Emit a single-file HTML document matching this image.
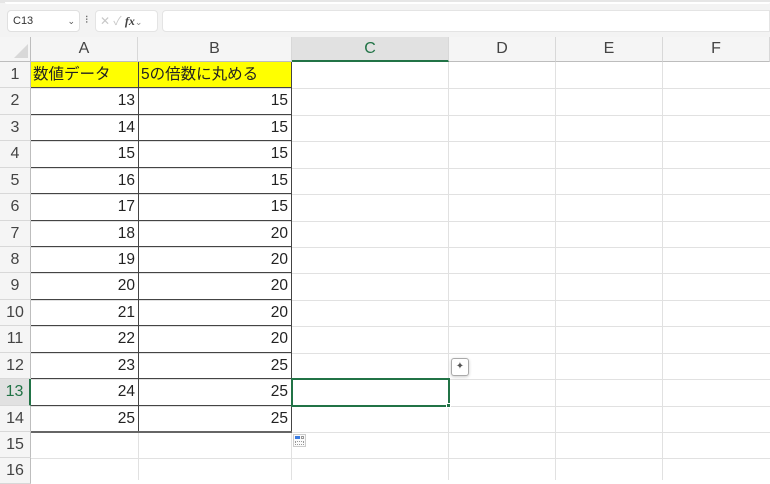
<!DOCTYPE html>
<html><head><meta charset="utf-8"><style>
*{margin:0;padding:0;box-sizing:border-box}
body{width:770px;height:480px;overflow:hidden;background:#fff;position:relative;font-family:"Liberation Sans","Noto Sans CJK JP",sans-serif;color:#222}
.a{position:absolute}
.vl{position:absolute;top:62px;width:1px;height:418px;background:#e1e1e1}
.hl{position:absolute;left:31px;width:739px;height:1px;background:#e1e1e1}
.ch{position:absolute;top:37px;height:25px;font-size:16px;color:#444;text-align:center;line-height:24px;border-right:1px solid #d8d8d8;border-bottom:1px solid #bdbdbd;background:#f5f5f5}
.rh{position:absolute;left:0;width:31px;font-size:16px;color:#444;text-align:center;background:#f5f5f5;border-bottom:1px solid #d8d8d8;border-right:1px solid #bdbdbd;line-height:26px}
.n{position:absolute;font-size:15.5px;text-align:right;padding-right:3px;line-height:26px;color:#222}
</style></head><body>
<div class="a" style="left:0;top:0;width:770px;height:37px;background:#f3f3f3"></div>
<div class="a" style="left:0;top:0;width:770px;height:3px;background:#e6e6e6"></div>
<div class="a" style="left:5px;top:2px;width:765px;height:2px;background:#fff;border-radius:0 0 4px 4px"></div>
<div class="a" style="left:7px;top:10px;width:73px;height:22px;background:#fff;border:1px solid #e0e0e0;border-radius:4px;font-size:11px;line-height:20px;padding-left:5px;color:#333">C13<span style="position:absolute;right:4px;font-size:9px;color:#555">⌄</span></div>
<div class="a" style="left:85px;top:13px;font-size:11px;color:#555">⁝</div>
<div class="a" style="left:95px;top:10px;width:63px;height:22px;background:#fff;border:1px solid #e4e4e4;border-radius:4px;font-size:12px;line-height:20px;color:#c8c8c8;padding-left:4px">✕ ✓ <i style="color:#444;font-family:'Liberation Serif',serif;font-weight:bold">fx</i><span style="font-size:9px;color:#888">⌄</span></div>
<div class="a" style="left:162px;top:10px;width:608px;height:22px;background:#fff;border:1px solid #e4e4e4;border-radius:4px 0 0 4px"></div>
<div class="a" style="left:0;top:37px;width:31px;height:25px;background:#f5f5f5;border-right:1px solid #bdbdbd;border-bottom:1px solid #bdbdbd"></div>
<div class="a" style="left:14px;top:44px;width:0;height:0;border-left:14px solid transparent;border-bottom:14px solid #d8d8d8"></div>
<div class="ch" style="left:31px;width:107px">A</div>
<div class="ch" style="left:138px;width:154px">B</div>
<div class="ch" style="left:292px;width:157px;background:#e1e1e1;color:#217346;border-bottom:2px solid #217346">C</div>
<div class="ch" style="left:449px;width:107px">D</div>
<div class="ch" style="left:556px;width:107px">E</div>
<div class="ch" style="left:663px;width:107px">F</div>
<div class="vl" style="left:138px"></div><div class="vl" style="left:291px"></div><div class="vl" style="left:448px"></div><div class="vl" style="left:555px"></div><div class="vl" style="left:662px"></div>
<div class="hl" style="top:88px"></div><div class="hl" style="top:115px"></div><div class="hl" style="top:141px"></div><div class="hl" style="top:168px"></div><div class="hl" style="top:194px"></div><div class="hl" style="top:221px"></div><div class="hl" style="top:247px"></div><div class="hl" style="top:273px"></div><div class="hl" style="top:300px"></div><div class="hl" style="top:326px"></div><div class="hl" style="top:353px"></div><div class="hl" style="top:379px"></div><div class="hl" style="top:406px"></div><div class="hl" style="top:432px"></div><div class="hl" style="top:458px"></div>
<div class="rh" style="top:62px;height:26px">1</div>
<div class="rh" style="top:88px;height:27px">2</div>
<div class="rh" style="top:115px;height:26px">3</div>
<div class="rh" style="top:141px;height:27px">4</div>
<div class="rh" style="top:168px;height:26px">5</div>
<div class="rh" style="top:194px;height:27px">6</div>
<div class="rh" style="top:221px;height:26px">7</div>
<div class="rh" style="top:247px;height:26px">8</div>
<div class="rh" style="top:273px;height:27px">9</div>
<div class="rh" style="top:300px;height:26px">10</div>
<div class="rh" style="top:326px;height:27px">11</div>
<div class="rh" style="top:353px;height:26px">12</div>
<div class="rh" style="top:379px;height:27px;background:#e1e1e1;color:#217346;border-right:2px solid #217346">13</div>
<div class="rh" style="top:406px;height:26px">14</div>
<div class="rh" style="top:432px;height:26px">15</div>
<div class="rh" style="top:458px;height:26px">16</div>
<div class="a" style="left:31px;top:62px;width:261px;height:26px;background:#ffff00;border-bottom:1px solid #444"></div>
<div class="a" style="left:138px;top:62px;width:1px;height:370px;background:#444"></div>
<div class="a" style="left:291px;top:62px;width:1px;height:370px;background:#444"></div>
<div class="a" style="left:33px;top:62px;font-size:15.5px;line-height:26px">数値データ</div>
<div class="a" style="left:141px;top:62px;font-size:15.5px;line-height:26px">5の倍数に丸める</div>
<div class="a" style="left:31px;top:114px;width:261px;height:1px;background:#444"></div>
<div class="a" style="left:31px;top:140px;width:261px;height:1px;background:#444"></div>
<div class="a" style="left:31px;top:167px;width:261px;height:1px;background:#444"></div>
<div class="a" style="left:31px;top:193px;width:261px;height:1px;background:#444"></div>
<div class="a" style="left:31px;top:220px;width:261px;height:1px;background:#444"></div>
<div class="a" style="left:31px;top:246px;width:261px;height:1px;background:#444"></div>
<div class="a" style="left:31px;top:272px;width:261px;height:1px;background:#444"></div>
<div class="a" style="left:31px;top:299px;width:261px;height:1px;background:#444"></div>
<div class="a" style="left:31px;top:325px;width:261px;height:1px;background:#444"></div>
<div class="a" style="left:31px;top:352px;width:261px;height:1px;background:#444"></div>
<div class="a" style="left:31px;top:378px;width:261px;height:1px;background:#444"></div>
<div class="a" style="left:31px;top:405px;width:261px;height:1px;background:#444"></div>
<div class="a" style="left:31px;top:431px;width:261px;height:2px;background:#666"></div>
<div class="n" style="left:31px;top:88px;width:107px">13</div><div class="n" style="left:139px;top:88px;width:152px">15</div>
<div class="n" style="left:31px;top:115px;width:107px">14</div><div class="n" style="left:139px;top:115px;width:152px">15</div>
<div class="n" style="left:31px;top:141px;width:107px">15</div><div class="n" style="left:139px;top:141px;width:152px">15</div>
<div class="n" style="left:31px;top:168px;width:107px">16</div><div class="n" style="left:139px;top:168px;width:152px">15</div>
<div class="n" style="left:31px;top:194px;width:107px">17</div><div class="n" style="left:139px;top:194px;width:152px">15</div>
<div class="n" style="left:31px;top:221px;width:107px">18</div><div class="n" style="left:139px;top:221px;width:152px">20</div>
<div class="n" style="left:31px;top:247px;width:107px">19</div><div class="n" style="left:139px;top:247px;width:152px">20</div>
<div class="n" style="left:31px;top:273px;width:107px">20</div><div class="n" style="left:139px;top:273px;width:152px">20</div>
<div class="n" style="left:31px;top:300px;width:107px">21</div><div class="n" style="left:139px;top:300px;width:152px">20</div>
<div class="n" style="left:31px;top:326px;width:107px">22</div><div class="n" style="left:139px;top:326px;width:152px">20</div>
<div class="n" style="left:31px;top:353px;width:107px">23</div><div class="n" style="left:139px;top:353px;width:152px">25</div>
<div class="n" style="left:31px;top:379px;width:107px">24</div><div class="n" style="left:139px;top:379px;width:152px">25</div>
<div class="n" style="left:31px;top:406px;width:107px">25</div><div class="n" style="left:139px;top:406px;width:152px">25</div>
<div class="a" style="left:291px;top:378px;width:159px;height:29px;border:2px solid #217346"></div>
<div class="a" style="left:446px;top:403px;width:5px;height:5px;background:#217346;border:1px solid #fff"></div>
<div class="a" style="left:451px;top:358px;width:18px;height:18px;border:1px solid #aaa;border-radius:3px;background:#fff;box-shadow:0 1px 3px rgba(0,0,0,.2);font-size:10px;text-align:center;line-height:16px;color:#555">✦</div>
<div class="a" style="left:293px;top:434px;width:13px;height:13px;border:1px solid #ccc;background:#fafafa"></div>
<div class="a" style="left:295px;top:436px;width:5px;height:3px;background:#3a7be0"></div>
<div class="a" style="left:301px;top:436px;width:3px;height:3px;border:1px solid #999"></div>
<div class="a" style="left:295px;top:441px;width:9px;height:4px;border:1px dotted #999"></div>
</body></html>
